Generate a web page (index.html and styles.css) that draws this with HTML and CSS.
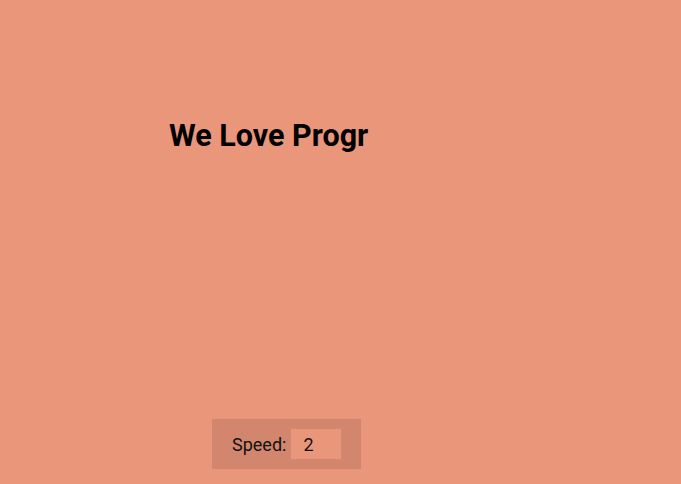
FILE: index.html
```html
<!DOCTYPE html>
<html lang="en">
<head>
<meta charset="UTF-8">
<title>We Love Programming</title>
<link rel="stylesheet" href="styles.css">
</head>
<body>
  <main class="stage">
    <h1 class="typed">We Love Progr</h1>
    <div class="controls">
      <label class="speed-label" for="speed">Speed:</label>
      <input class="speed-input" id="speed" type="number" value="2" min="1" max="10">
    </div>
  </main>
</body>
</html>
```
FILE: styles.css
```css
html, body {
  margin: 0;
  padding: 0;
}
body {
  background: #ea967a;
  font-family: Roboto, "Liberation Sans", sans-serif;
  height: 484px;
  overflow: hidden;
}
.stage {
  display: flex;
  flex-direction: column;
  align-items: flex-start;
  height: 484px;
  padding-left: 169px;
  box-sizing: border-box;
}
.typed {
  margin: 117px 0 0 0;
  font-size: 30.5px;
  font-weight: 700;
  color: #000;
  line-height: 37px;
}
.controls {
  margin-top: auto;
  margin-bottom: 15px;
  margin-left: 43px;
  display: flex;
  align-items: center;
  gap: 5px;
  padding: 10px 20px;
  height: 50px;
  box-sizing: border-box;
  background: rgba(0, 0, 0, 0.1);
}
.speed-label {
  font-size: 18px;
  color: #111;
}
.speed-input {
  width: 50px;
  height: 30px;
  box-sizing: border-box;
  border: none;
  outline: none;
  background: #ea967a;
  font-family: Roboto, "Liberation Sans", sans-serif;
  font-size: 18px;
  color: #111;
  padding: 0 0 0 12px;
  -moz-appearance: textfield;
}
.speed-input::-webkit-outer-spin-button,
.speed-input::-webkit-inner-spin-button {
  -webkit-appearance: none;
  margin: 0;
}
```
